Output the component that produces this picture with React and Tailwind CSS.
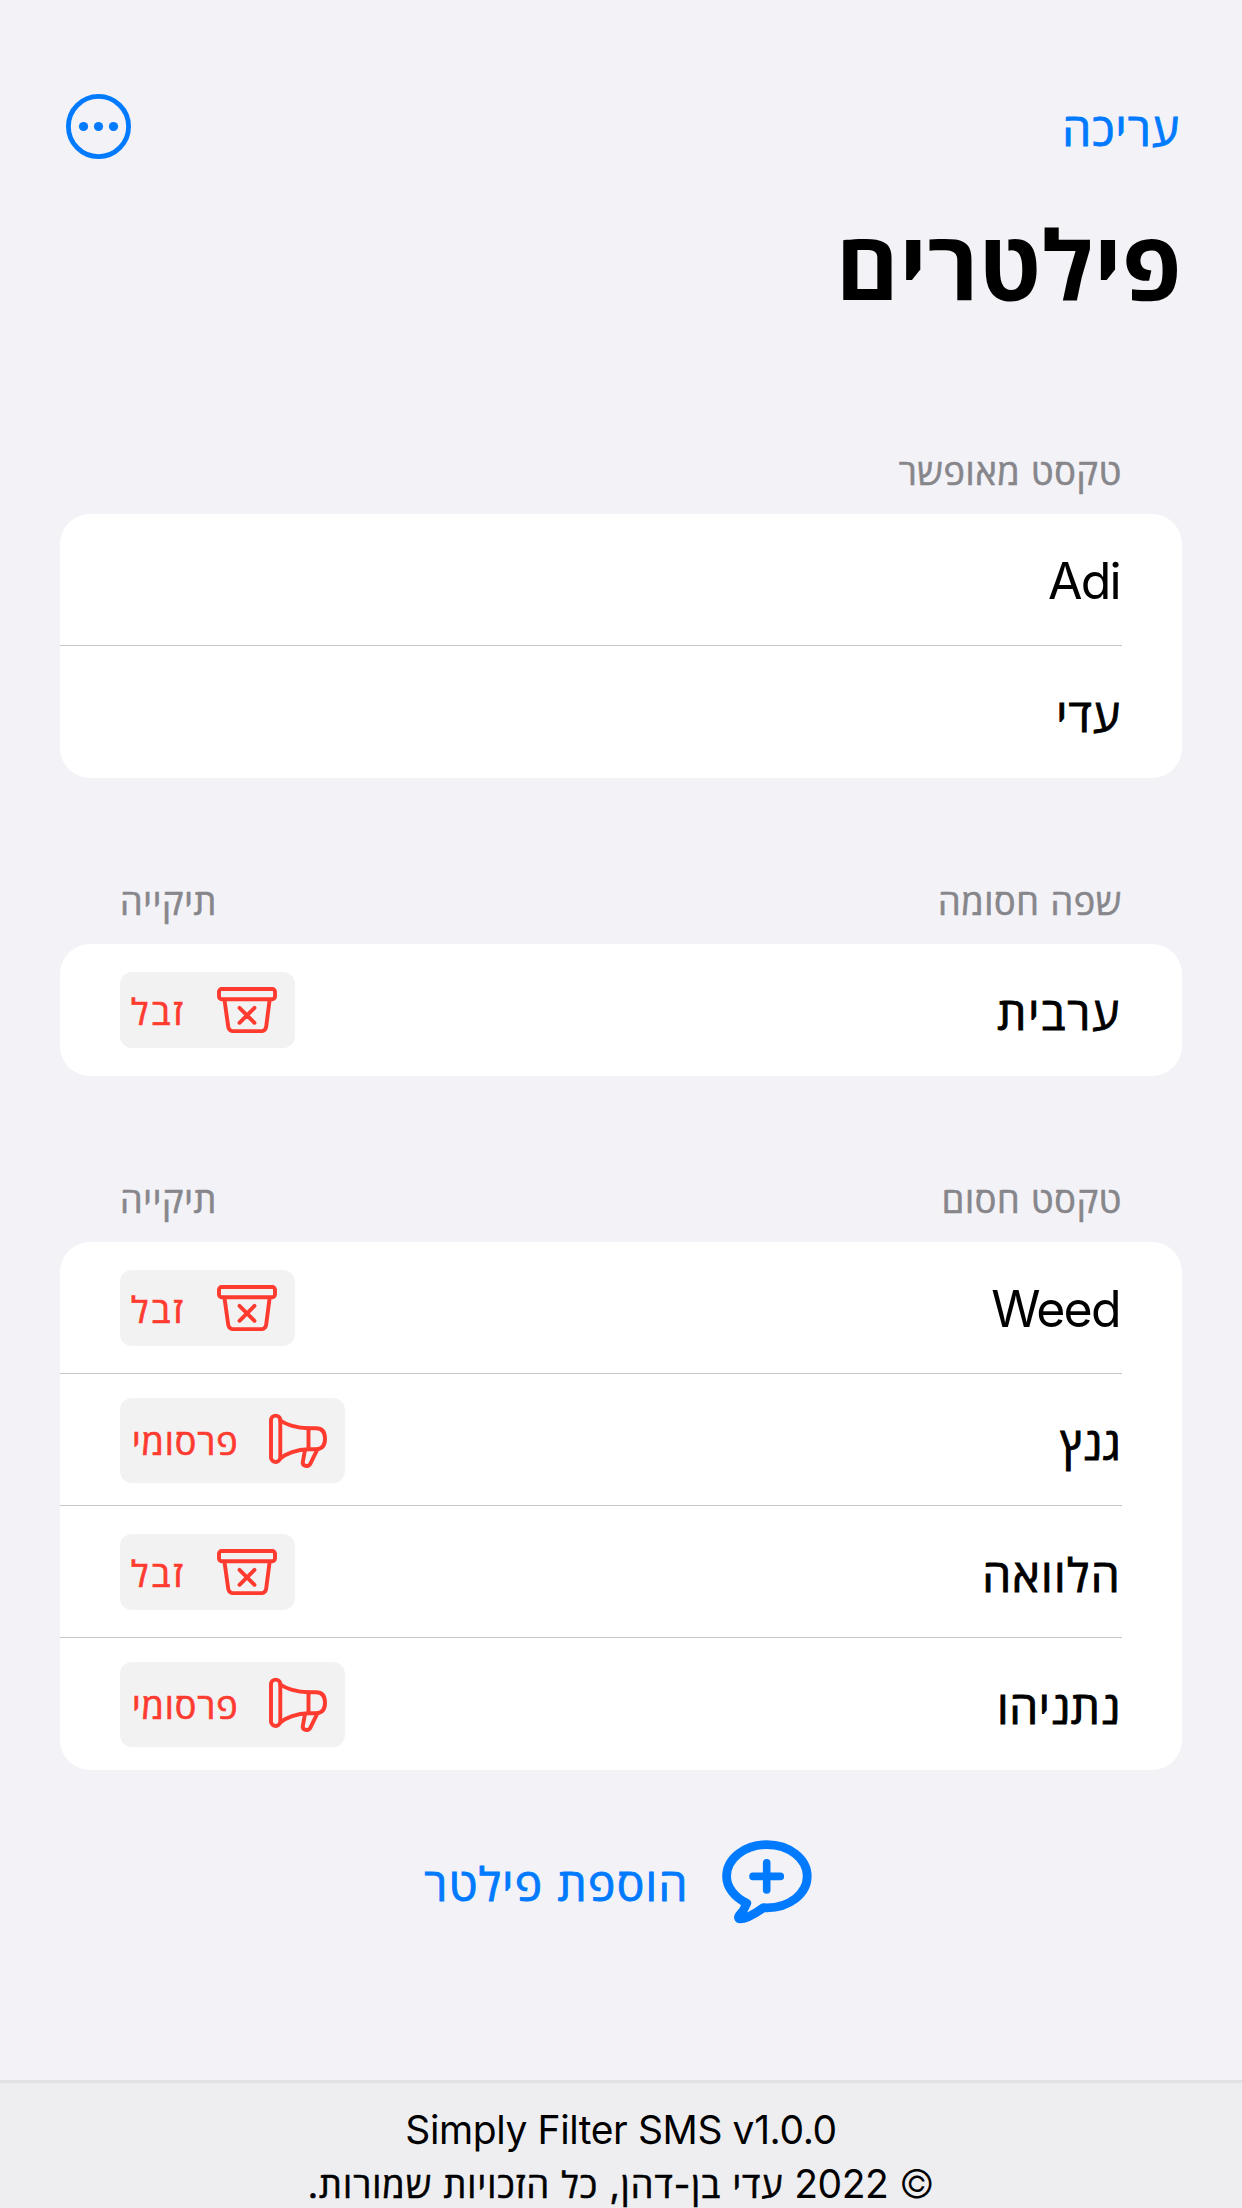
const sections = [
  { title: "טקסט מאופשר", rows: [{ name: "Adi", latin: true }, { name: "עדי", tracking: "tracking-[1.1px]" }] },
  { title: "שפה חסומה", folder: true, rows: [{ name: "ערבית", kind: "junk", tracking: "tracking-[1.9px]" }] },
  {
    title: "טקסט חסום",
    folder: true,
    rows: [
      { name: "Weed", kind: "junk", latin: true },
      { name: "גנץ", kind: "promo", tracking: "tracking-normal" },
      { name: "הלוואה", kind: "junk", tracking: "tracking-[1.4px]" },
      { name: "נתניהו", kind: "promo", tracking: "tracking-[0.6px]" },
    ],
  },
];

function MoreIcon() {
  return (
    <svg className="size-[65px]" viewBox="0 0 65 65" fill="none">
      <circle cx="32.5" cy="32.5" r="30.1" stroke="#007aff" strokeWidth="4.8" />
      <circle cx="17.5" cy="32.5" r="4.6" fill="#007aff" />
      <circle cx="32.5" cy="32.5" r="4.6" fill="#007aff" />
      <circle cx="47.5" cy="32.5" r="4.6" fill="#007aff" />
    </svg>
  );
}

function BinIcon() {
  return (
    <svg className="h-[46px] w-[60px]" viewBox="0 0 60 46" fill="none" stroke="#ff3b30" strokeWidth="3.9" strokeLinecap="round" strokeLinejoin="round">
      <rect x="2" y="2" width="56" height="10.2" rx="2.6" />
      <path d="M7.5 13 L11.2 39.6 Q11.8 44.1 16 44.1 H44.6 Q48.6 44.1 49.2 39.6 L52.6 13" />
      <path d="M22.5 20.8 L37.5 35.8 M37.5 20.8 L22.5 35.8" />
    </svg>
  );
}

function MegaphoneIcon() {
  return (
    <svg className="h-[56px] w-[58px]" viewBox="0 0 58 56" fill="none" stroke="#ff3b30" strokeWidth="3.9" strokeLinecap="round" strokeLinejoin="round">
      <path d="M2 6.6 A4.7 4.7 0 0 1 11.3 6.6 V45 A4.7 4.7 0 0 1 2 45 Z" />
      <path d="M11.3 7.5 C17 11.5 28 15.2 39.5 15.3 H47 C53 15.3 56 19 56 25.8 C56 32.5 53 36.2 47 36.2 H39.5 C28 36.4 17 40.5 11.3 45.4" />
      <path d="M39.5 15.3 V36.2" />
      <path d="M36 37 L33.8 49 C33.2 53.2 39.5 54.5 41.4 50.6 L48.5 36.2" />
    </svg>
  );
}

function AddBubbleIcon() {
  return (
    <svg className="h-[84px] w-[90px]" viewBox="0 0 90 84" fill="none" stroke="#007aff" strokeLinecap="round" strokeLinejoin="round">
      <path strokeWidth="8.8" d="M24.8 63.2 C12.5 57.5 4.6 47.2 4.6 36.3 C4.6 18.8 22.5 4.6 44.9 4.6 C67.3 4.6 85.2 18.8 85.2 36.3 C85.2 53.8 67.3 67.8 44.9 67.8 L41.5 67.6 C34 73 24 78.8 18 78.8 C16.5 78.8 16 77.2 17 75.8 C20 72.5 23 68 24.8 63.2 Z" />
      <path strokeWidth="7.6" d="M44.7 22.8 V50 M31 36.4 H58.3" />
    </svg>
  );
}

function Badge({ kind }) {
  const junk = kind === "junk";
  return (
    <div className={`flex items-center justify-between rounded-[12px] bg-[#f2f2f3] ps-[18px] ${junk ? "h-[76px] w-[175px] pe-[11px]" : "mt-px h-[85px] w-[225px] pe-[12px]"}`}>
      {junk ? <BinIcon /> : <MegaphoneIcon />}
      <span className={`text-[36px] leading-[50px] text-[#ff3b30] [-webkit-text-stroke:0.7px] ${junk ? "pt-1 tracking-[3px]" : "pt-[3px] tracking-[0.9px]"}`}>
        {junk ? "זבל" : "פרסומי"}
      </span>
    </div>
  );
}

function Section({ title, folder, rows }) {
  return (
    <section className="px-[60px]">
      <header className="flex h-[66px] justify-between px-[60px] pt-px text-[36px] leading-[46px] tracking-[0.7px] text-[#86868b] [-webkit-text-stroke:0.6px]">
        <h2>{title}</h2>
        {folder && <span>תיקייה</span>}
      </header>
      <ul className="overflow-hidden rounded-[30px] bg-white">
        {rows.map((row, i) => (
          <li key={row.name} className="ps-[60px]">
            <div className={`flex h-[132px] items-center justify-between pe-[60px] ${i < rows.length - 1 ? "shadow-[inset_0_-1px_0_#c6c6c8]" : ""}`}>
              <span className={`leading-[60px] text-black ${row.latin ? "ps-[2px] pt-[2px] text-[50px] tracking-[-1.7px]" : `ps-px pt-[6px] text-[46px] [-webkit-text-stroke:0.9px] ${row.tracking}`}`}>
                {row.name}
              </span>
              {row.kind && <Badge kind={row.kind} />}
            </div>
          </li>
        ))}
      </ul>
    </section>
  );
}

export default function App() {
  return (
    <div dir="rtl" className="flex h-[2208px] w-[1242px] flex-col overflow-hidden bg-[#f2f2f7] font-['Inter','Open_Sans',sans-serif]">
      <nav className="flex h-[188px] items-start justify-between ps-[62px] pe-[66px] pt-[94px]">
        <button className="pt-[2px] text-[46px] leading-[66px] tracking-[1.1px] text-[#007aff] [-webkit-text-stroke:0.9px]">עריכה</button>
        <button><MoreIcon /></button>
      </nav>
      <h1 className="h-[260px] px-[60px] pt-[18px] text-[96px] leading-[120px] font-bold tracking-[0.4px] text-black">פילטרים</h1>
      <main className="flex flex-col gap-[100px]">
        {sections.map((s) => (
          <Section key={s.title} {...s} />
        ))}
      </main>
      <button className="mt-[69px] flex h-[86px] items-center justify-center gap-[33px] ps-[6px] text-[#007aff]">
        <AddBubbleIcon />
        <span className="pt-[3px] text-[46px] leading-[60px] tracking-[1.3px] [-webkit-text-stroke:0.9px]">הוספת פילטר</span>
      </button>
      <footer className="mt-auto h-[128px] border-t-[3px] border-[#e1e1e4] bg-[#eeeef0] pt-[20px] text-center text-[39px] leading-[54px] text-black">
        <p dir="ltr" className="tracking-[-0.4px]">Simply Filter SMS v1.0.0</p>
        <p className="tracking-[-0.4px]">
          <span className="font-light">©</span> 2022 <span className="text-[36px] tracking-[1.05px] [-webkit-text-stroke:0.6px]">עדי בן-דהן, כל הזכויות שמורות.</span>
        </p>
      </footer>
    </div>
  );
}
